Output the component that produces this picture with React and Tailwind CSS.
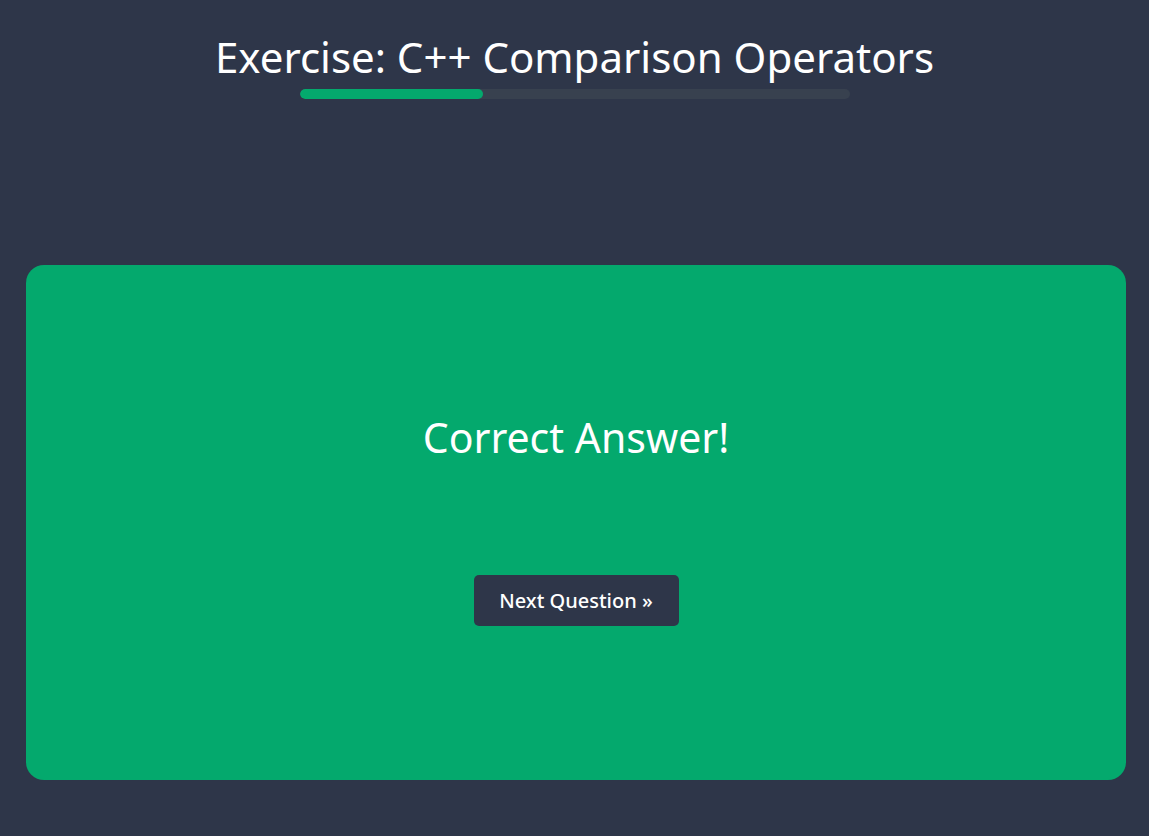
import React from 'react';

const App = () => {
  const progress = 33.3;

  return (
    <div
      className="min-h-screen w-full bg-[#2e3649] text-white flex flex-col"
      style={{ fontFamily: '"Noto Sans", "Open Sans", sans-serif' }}
    >
      {/* Header */}
      <div className="flex flex-col items-center pt-[28px]">
        <h1 className="text-[42px] leading-[57px] font-normal">
          Exercise: C++ Comparison Operators
        </h1>
        <div className="mt-[4px] w-[550px] h-[10px] rounded-full bg-[#38414f] overflow-hidden">
          <div className="h-full rounded-full bg-[#04a96d]" style={{ width: `${progress}%` }}></div>
        </div>
      </div>

      {/* Result card */}
      <div className="pl-[26px] pt-[166px]">
        <div className="w-[1100px] h-[515px] rounded-[18px] bg-[#04a96d] flex flex-col items-center">
          <div className="mt-[146px] text-[41px] leading-[52px]">Correct Answer!</div>
          <button className="mt-[112px] h-[51px] w-[205px] rounded-[5px] bg-[#2e3649] text-white text-[20px] font-medium">
            Next Question »
          </button>
        </div>
      </div>
    </div>
  );
};

export default App;
